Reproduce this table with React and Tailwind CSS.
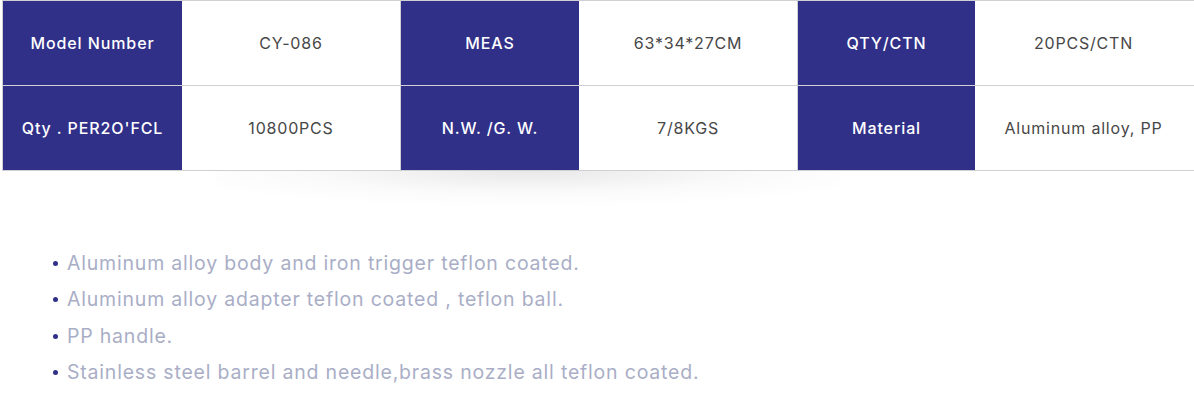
import React from "react";

const specs = [
  ["Model Number", "CY-086", "MEAS", "63*34*27CM", "QTY/CTN", "20PCS/CTN"],
  ["Qty . PER2O'FCL", "10800PCS", "N.W. /G. W.", "7/8KGS", "Material", "Aluminum alloy, PP"],
];

const features = [
  "Aluminum alloy body and iron trigger teflon coated.",
  "Aluminum alloy adapter teflon coated , teflon ball.",
  "PP handle.",
  "Stainless steel barrel and needle,brass nozzle all teflon coated.",
];

const App = () => {
  return (
    <div className="w-[1194px] h-[405px] bg-white overflow-hidden font-['Inter',sans-serif]">
      <div className="pl-[2px]">
        <div className="border-t border-l border-[#cfcfd4] w-[1196px]">
          {specs.map((row, r) => (
            <div
              key={r}
              className="grid grid-cols-[179px_218px_179px_218px_178px_223px] h-[85px] border-b border-[#cfcfd4]"
            >
              {row.map((cell, i) =>
                i % 2 === 0 ? (
                  <div
                    key={i}
                    className={`flex items-center justify-center bg-[#303089] text-white text-[16px] font-medium tracking-[0.9px] ${
                      i > 0 ? "border-l border-[#cfcfd4]" : ""
                    }`}
                  >
                    {cell}
                  </div>
                ) : (
                  <div
                    key={i}
                    className={`flex items-center justify-center text-[#474747] text-[16px] tracking-[0.8px] ${
                      i === 5 ? "pr-[6px]" : ""
                    }`}
                  >
                    {cell}
                  </div>
                )
              )}
            </div>
          ))}
        </div>
      </div>

      {/* curved shadow under the table */}
      <div className="ml-[215px] w-[625px] h-[36px] bg-[radial-gradient(ellipse_60%_100%_at_50%_0%,rgba(0,0,0,0.09),rgba(0,0,0,0.02)_60%,transparent_100%)]" />

      <ul className="mt-[38px] pl-[53px] flex flex-col">
        {features.map((f) => (
          <li key={f} className="flex items-center h-[36.5px] text-[19.5px] text-[#a9aec6] tracking-[0.8px]">
            <span className="w-[5px] h-[5px] rounded-full bg-[#303089] mr-[9px] shrink-0" />
            {f}
          </li>
        ))}
      </ul>
    </div>
  );
};

export default App;
